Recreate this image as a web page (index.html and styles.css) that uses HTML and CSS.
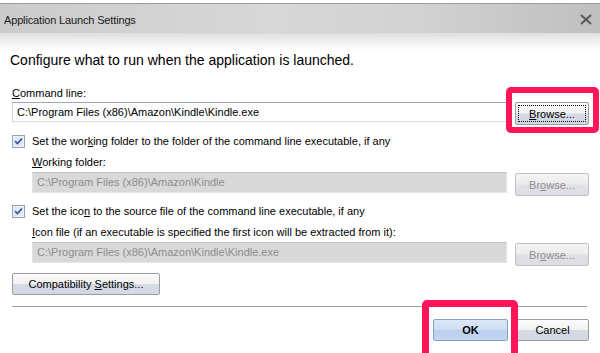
FILE: index.html
```html
<!DOCTYPE html>
<html lang="en">
<head>
  <meta charset="UTF-8">
  <title>Application Launch Settings</title>
  <meta name="viewport" content="width=device-width, initial-scale=1.0">
  <link rel="stylesheet" href="styles.css">
</head>
<body>
  <div class="dialog">
    <div class="titlebar">
      <span class="title">Application Launch Settings</span>
      <svg class="close" width="14" height="11" viewBox="0 0 14 11">
        <path d="M2 1 L12 10 M12 1 L2 10" stroke="#595959" stroke-width="2" fill="none"/>
      </svg>
    </div>

    <div class="content">
      <p class="intro">Configure what to run when the application is launched.</p>

      <div class="label label-cmd"><u>C</u>ommand line:</div>
      <div class="field-row">
        <div class="textbox">C:\Program Files (x86)\Amazon\Kindle\Kindle.exe</div>
        <button class="btn focused"><span class="focus-rect"><span><u>B</u>rowse...</span></span></button>
      </div>

      <div class="check-row">
        <svg class="checkbox" width="13" height="13" viewBox="0 0 13 13">
          <rect x="0.5" y="0.5" width="12" height="12" fill="#eef1f6" stroke="#94a3b8"/>
          <rect x="2" y="2" width="9" height="9" fill="#e3e9f2"/>
          <path d="M3 6.2 L5.4 8.6 L10 3.6" stroke="#3459a8" stroke-width="1.7" fill="none"/>
        </svg>
        <span>Set the wor<u>k</u>ing folder to the folder of the command line executable, if any</span>
      </div>

      <div class="indent">
        <div class="label label-sub"><u>W</u>orking folder:</div>
        <div class="field-row field-row-disabled">
          <div class="textbox disabled">C:\Program Files (x86)\Amazon\Kindle</div>
          <button class="btn disabled"><span>Br<u>o</u>wse...</span></button>
        </div>
      </div>

      <div class="check-row check-row-2">
        <svg class="checkbox" width="13" height="13" viewBox="0 0 13 13">
          <rect x="0.5" y="0.5" width="12" height="12" fill="#eef1f6" stroke="#94a3b8"/>
          <rect x="2" y="2" width="9" height="9" fill="#e3e9f2"/>
          <path d="M3 6.2 L5.4 8.6 L10 3.6" stroke="#3459a8" stroke-width="1.7" fill="none"/>
        </svg>
        <span>Set the ico<u>n</u> to the source file of the command line executable, if any</span>
      </div>

      <div class="indent">
        <div class="label label-sub"><u>I</u>con file (if an executable is specified the first icon will be extracted from it):</div>
        <div class="field-row field-row-disabled">
          <div class="textbox disabled">C:\Program Files (x86)\Amazon\Kindle\Kindle.exe</div>
          <button class="btn disabled"><span>Br<u>o</u>wse...</span></button>
        </div>
      </div>

      <button class="btn compat"><span>Compatibility <u>S</u>ettings...</span></button>

      <hr class="separator">

      <div class="actions">
        <button class="btn default">OK</button>
        <button class="btn cancel">Cancel</button>
      </div>
    </div>

    <!-- annotation boxes from the screenshot -->
    <div class="highlight highlight-browse"></div>
    <div class="highlight highlight-ok"></div>
  </div>
</body>
</html>
```

FILE: styles.css
```css
:root {
  --text-color: #000;
  --disabled-text: #8d8d8d;
  --highlight: #fc1558;
  --btn-border: #9c9c9c;
}

* {
  margin: 0;
  padding: 0;
  box-sizing: border-box;
}

body {
  font-family: 'Liberation Sans', Arial, sans-serif;
  font-size: 11px;
  color: var(--text-color);
  background: #fff;
  width: 600px;
  height: 353px;
  overflow: hidden;
}

.dialog {
  position: relative;
  padding-top: 3px;
}

/* Title bar */
.titlebar {
  height: 30px;
  border-top: 1px solid #9d9d9d;
  background: linear-gradient(to right, #cbcbcb, #d8d8d8 45%, #d2d2d2 70%, #bfbfbf);
  display: flex;
  align-items: center;
  justify-content: space-between;
  padding: 0 7px 0 4px;
}

.titlebar .title {
  font-size: 11px;
  color: #1a1a1a;
  margin-top: 2px;
  letter-spacing: -0.15px;
}

.titlebar .close {
  margin-top: 2px;
}

/* Main content */
.content {
  padding: 18px 11px 0 12px;
  background: linear-gradient(to bottom, #dedede 0, #ececec 6px, #f7f7f7 12px, #fff 19px);
}

.intro {
  font-size: 14px;
  line-height: 18px;
  margin-left: -2px;
}

.label {
  line-height: 14px;
}

.label-cmd {
  margin-top: 17px;
}

.label-sub {
  margin-top: 7px;
}

.field-row {
  display: flex;
  align-items: flex-start;
  gap: 8px;
  margin-top: 2px;
}

.field-row-disabled {
  margin-top: 3px;
}

.textbox {
  flex: 1;
  height: 20px;
  line-height: 18px;
  padding-left: 4px;
  border: 1px solid;
  border-color: #9fa8b6 #cbd3dd #d6dde6 #cbd3dd;
  background: #fff;
  white-space: nowrap;
  overflow: hidden;
}

.textbox.disabled {
  background: #d9d9d9;
  border-color: #c4c4c4 #e2e2e2 #e6e6e6 #e2e2e2;
  color: var(--disabled-text);
}

.field-row-disabled .textbox {
  height: 21px;
  line-height: 19px;
}

/* Buttons */
.btn {
  font-family: inherit;
  font-size: 11px;
  color: var(--text-color);
  width: 74px;
  height: 23px;
  border: 1px solid var(--btn-border);
  border-radius: 2px;
  background: linear-gradient(to bottom, #fbfbfb 0, #f2f2f2 48%, #d6dbe6 52%, #d2d8e4 100%);
  display: flex;
  align-items: center;
  justify-content: center;
  flex-shrink: 0;
}

.btn.focused {
  padding: 2px;
}

.btn .focus-rect {
  flex: 1;
  align-self: stretch;
  display: flex;
  align-items: center;
  justify-content: center;
  border: 1px dotted #000;
}

.btn.disabled {
  color: var(--disabled-text);
  border-color: #c3c3c3;
  background: linear-gradient(to bottom, #f4f4f4 0, #ececec 48%, #dfe1e6 52%, #dcdee3 100%);
  margin-top: 1px;
}

.btn.compat {
  width: 148px;
  height: 22px;
  margin-top: 7px;
}

.btn.default {
  font-weight: bold;
  width: 75px;
  height: 22px;
  border-color: #8aa0c0;
  background: linear-gradient(to bottom, #dbe7f7 0, #cfdff4 45%, #b8cfee 55%, #c4d8f2 100%);
}

.btn.cancel {
  width: 73px;
  height: 22px;
}

/* Check rows */
.check-row {
  display: flex;
  align-items: center;
  gap: 7px;
  margin-top: 9px;
  height: 14px;
}

.check-row-2 {
  margin-top: 8px;
}

.checkbox {
  flex-shrink: 0;
}

.indent {
  padding-left: 20px;
}

.separator {
  border: none;
  border-top: 1px solid #a0a0a0;
  margin-top: 11px;
  margin-right: 2px;
}

.actions {
  display: flex;
  justify-content: flex-end;
  gap: 8px;
  margin-top: 12px;
}

/* Red annotation rectangles */
.highlight {
  position: absolute;
  border: 6px solid var(--highlight);
  border-radius: 5px;
  pointer-events: none;
}

.highlight-browse {
  left: 506px;
  top: 87px;
  width: 93px;
  height: 46px;
}

.highlight-ok {
  left: 422px;
  top: 300px;
  width: 96px;
  height: 62px;
  border-width: 7px;
}
```
